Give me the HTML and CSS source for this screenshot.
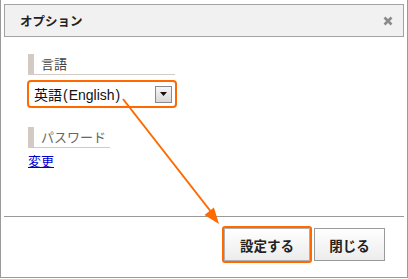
FILE: index.html
```
<!DOCTYPE html>
<html lang="ja">
<head>
    <meta charset="UTF-8">
    <title>オプション</title>
    <link rel="stylesheet" href="styles.css">
</head>
<body>
    <div class="dialog">
        <div class="dialog-header">
            <span class="dialog-title">オプション</span>
            <svg class="close-icon" width="10" height="10" viewBox="0 0 10 10">
                <path d="M1.5 1.5 L8.5 8.5 M8.5 1.5 L1.5 8.5" stroke="#8a8a8a" stroke-width="2.6"/>
            </svg>
        </div>

        <div class="dialog-body">
            <div class="field-label label-lang">言語</div>
            <div class="select-box">
                <span class="select-text">英語<span class="paren">(</span>English<span class="paren">)</span></span>
                <span class="select-button">
                    <svg width="7" height="4" viewBox="0 0 7 4"><path d="M0 0 H7 L3.5 4 Z" fill="#111"/></svg>
                </span>
            </div>

            <div class="field-label label-pass">パスワード</div>
            <a href="#" class="change-link">変更</a>
        </div>

        <div class="dialog-footer">
            <span class="btn-highlight"><button class="btn">設定する</button></span>
            <button class="btn">閉じる</button>
        </div>

        <!-- callout arrow -->
        <svg class="callout" width="408" height="279" viewBox="0 0 408 279">
            <line x1="123" y1="99" x2="212" y2="213" stroke="#ff6a00" stroke-width="2"/>
            <polygon points="219,224 213.9,207.6 204.5,215" fill="#ff6a00"/>
        </svg>
    </div>
</body>
</html>
```

FILE: styles.css
```
body {
    margin: 0;
    background: #fff;
    font-family: "Liberation Sans", "Noto Sans CJK JP", sans-serif;
    color: #222;
}

.dialog {
    position: relative;
    width: 408px;
    height: 278px;
    box-sizing: border-box;
    border: 1px solid #9a9a9a;
    border-top: none;
    padding: 4px 3px 0;
    display: flex;
    flex-direction: column;
}

.dialog-header {
    height: 33px;
    flex-shrink: 0;
    box-sizing: border-box;
    border: 1px solid #a3a3a3;
    background: #f1f1f1;
    display: flex;
    align-items: center;
    justify-content: space-between;
    padding: 0 10px 0 15px;
}

.dialog-title {
    font-family: "Noto Sans CJK JP", sans-serif;
    font-size: 12.5px;
    font-weight: bold;
    color: #222;
}

.close-icon {
    display: block;
}

.dialog-body {
    padding: 17px 0 0 24px;
    height: 180px;
    flex-shrink: 0;
    box-sizing: border-box;
    border-bottom: 1px solid #9a9a9a;
}

.field-label {
    height: 21px;
    box-sizing: border-box;
    border-left: 6px solid #d3cbc3;
    border-bottom: 1px solid #d3cbc3;
    padding-left: 7px;
    font-family: "Noto Sans CJK JP", sans-serif;
    font-size: 13px;
    line-height: 20px;
    color: #444;
}

.label-lang {
    width: 147px;
}

.label-pass {
    width: 82px;
    margin-top: 19px;
    color: #666;
}

.select-box {
    margin-top: 5px;
    margin-left: -1px;
    width: 150px;
    height: 28px;
    box-sizing: border-box;
    border: 2px solid #ff6a00;
    border-radius: 4px;
    display: flex;
    align-items: center;
    justify-content: space-between;
    padding: 0 3px 0 5px;
}

.select-text {
    font-size: 14px;
    color: #111;
}

.paren {
    margin: 0 1px;
}

.select-button {
    width: 17px;
    height: 17px;
    box-sizing: border-box;
    border: 1px solid #8a8a8a;
    background: linear-gradient(#f6f6f6, #d8d8d8);
    display: flex;
    align-items: center;
    justify-content: center;
}

.select-button svg {
    display: block;
}

.change-link {
    display: inline-block;
    margin-top: 4px;
    font-family: "Noto Sans CJK JP", sans-serif;
    font-size: 13px;
    line-height: 18px;
    color: #0000cc;
}

.dialog-footer {
    display: flex;
    justify-content: flex-end;
    align-items: center;
    gap: 2px;
    padding: 9px 19px 0 0;
}

.btn-highlight {
    display: block;
    border: 2px solid #ff6a00;
    border-radius: 3px;
}

.btn {
    display: block;
    margin: 0;
    width: 71px;
    height: 33px;
    padding: 0;
    border: 1px solid #9a9a9a;
    background: linear-gradient(#ffffff, #ececec);
    font-family: "Noto Sans CJK JP", sans-serif;
    font-size: 13.5px;
    font-weight: bold;
    color: #222;
}

.btn-highlight .btn {
    width: 86px;
    border-color: #b0b0b0;
}

.callout {
    position: absolute;
    left: -1px;
    top: 0;
    pointer-events: none;
}
```
